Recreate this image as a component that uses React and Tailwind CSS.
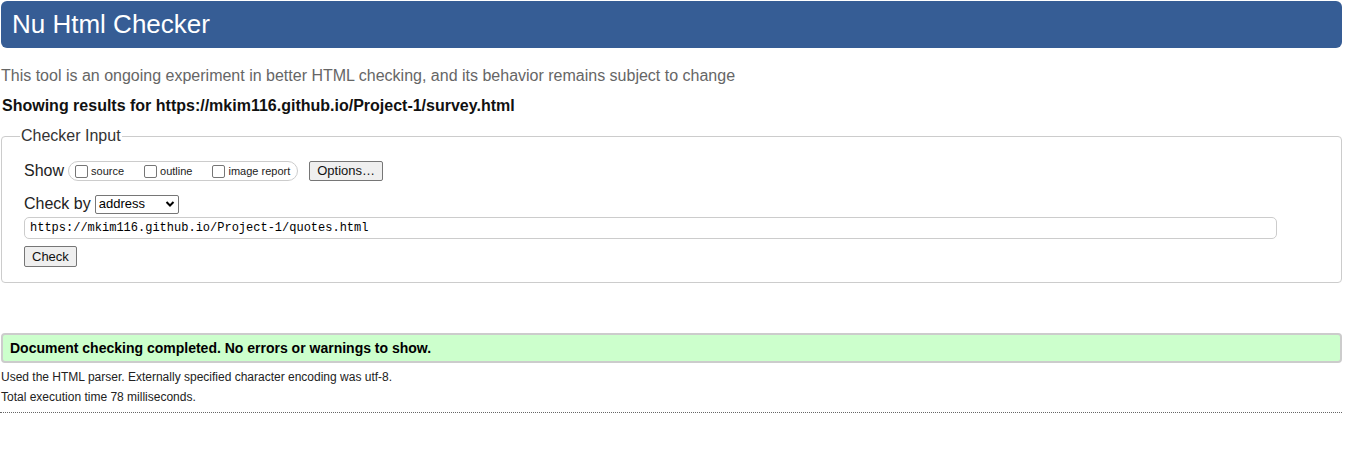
import React from "react";

function Checkbox({ label }) {
  return (
    <label className="flex items-center">
      <span className="inline-block w-[13px] h-[13px] border border-[#767676] rounded-[2px] bg-white mr-[3px]"></span>
      <span className="text-[11px] text-[#222]">{label}</span>
    </label>
  );
}

function App() {
  return (
    <div className="w-[1342px] bg-white text-[#222] font-['Liberation_Sans',Arial,sans-serif]">
      <h1 className="mt-[1px] ml-[1px] h-[47px] rounded-[6px] bg-[#365d95] text-white text-[26px] leading-[47px] pl-[11px]">
        Nu Html Checker
      </h1>

      <p className="mt-[18px] pl-[1px] text-[16px] leading-[20px] text-[#666]">
        This tool is an ongoing experiment in better HTML checking, and its behavior remains subject to change
      </p>
      <p className="mt-[10px] pl-[2px] text-[16px] leading-[20px] font-bold text-[#111]">
        Showing results for https://mkim116.github.io/Project-1/survey.html
      </p>

      <fieldset className="mt-[8px] ml-[1px] border border-[#ccc] rounded-[4px] pl-[22px] pr-[64px] pb-[14px] pt-[11px]">
        <legend className="text-[16px] text-[#333] px-[1px] -ml-[4px]">Checker Input</legend>

        <div className="flex items-center">
          <span className="text-[16px] text-[#222] mr-[4px]">Show</span>
          <div className="flex items-center h-[20px] border border-[#ccc] rounded-full pl-[6px] pr-[7px] gap-[20px]">
            <Checkbox label="source" />
            <Checkbox label="outline" />
            <Checkbox label="image report" />
          </div>
          <button className="ml-[11px] h-[20px] px-[7px] text-[13px] leading-[18px] border border-[#767676] rounded-[2px] bg-[#efefef] text-[#111]">
            Options…
          </button>
        </div>

        <div className="flex items-center mt-[9px]">
          <span className="text-[16px] text-[#222] mr-[4px]">Check by</span>
          <div className="flex items-center justify-between w-[84px] h-[19px] border border-[#767676] rounded-[2px] bg-white pl-[3px] pr-[3px]">
            <span className="text-[13px] text-black">address</span>
            <svg width="10" height="8" viewBox="0 0 10 8">
              <path d="M1.5 2 L5 5.5 L8.5 2" fill="none" stroke="#000" strokeWidth="2" />
            </svg>
          </div>
        </div>

        <div className="mt-[1px] h-[22px] border border-[#ccc] rounded-[5px] flex items-center pl-[5px] font-['Liberation_Mono',monospace] text-[12px] text-black">
          https://mkim116.github.io/Project-1/quotes.html
        </div>

        <button className="mt-[7px] h-[21px] px-[7px] text-[13px] leading-[19px] border border-[#767676] rounded-[2px] bg-[#efefef] text-[#111]">
          Check
        </button>
      </fieldset>

      <div className="mt-[50px] ml-[1px] h-[30px] border-2 border-[#ccc] rounded-[4px] bg-[#ccffcc] flex items-center pl-[7px]">
        <p className="text-[14px] font-bold text-black">Document checking completed. No errors or warnings to show.</p>
      </div>

      <p className="mt-[6px] pl-[1px] text-[12px] leading-[16px] text-[#222]">
        Used the HTML parser. Externally specified character encoding was utf-8.
      </p>
      <p className="mt-[4px] pl-[1px] text-[12px] leading-[16px] text-[#222]">
        Total execution time 78 milliseconds.
      </p>
      <div className="mt-[7px] border-b border-dotted border-[#666]"></div>
    </div>
  );
}

export default App;
